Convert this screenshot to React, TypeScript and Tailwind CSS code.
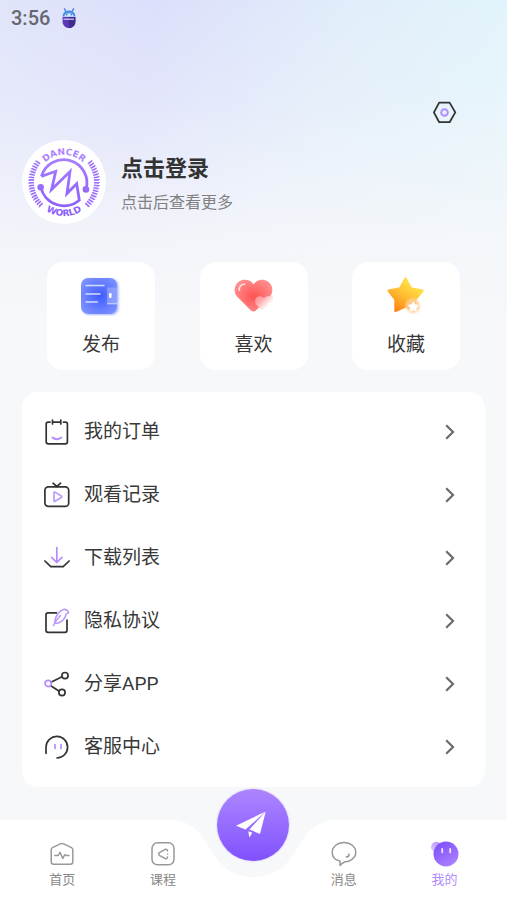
import type { ReactNode } from "react";

const TICKS = Array.from({ length: 18 }, (_, i) => -37 + i * 4.8);

function AvatarLogo() {
  return (
    <svg viewBox="-42 -42 84 84" className="size-full" aria-hidden="true">
      <defs>
        <linearGradient
          id="logo-fill"
          gradientUnits="userSpaceOnUse"
          x1="0"
          y1="-36"
          x2="0"
          y2="36"
        >
          <stop offset="0" stopColor="#b088ff" />
          <stop offset="1" stopColor="#8657fb" />
        </linearGradient>
        <path id="logo-top" d="M-27.2 0A27.2 27.2 0 0 1 27.2 0" />
        <path id="logo-bottom" d="M-34 0A34 34 0 0 0 34 0" />
      </defs>
      <g stroke="url(#logo-fill)" fill="none">
        <path
          d="M-22.6-5.6A23.2 23.2 0 1 1 22 7.4M-22.6-5.6L-8.3-10.7L-12.4 7.4L6-10.4L3 11.6L12.7 1.8L15.3 18.2A23.8 23.8 0 0 1-23.2 5.3"
          strokeWidth="2.8"
        />
        {TICKS.map((deg) => (
          <g key={deg} strokeWidth="1.7">
            <path d="M30 0H35L35 .01" transform={`rotate(${deg})`} />
            <path d="M30 0H35L35 .01" transform={`rotate(${180 - deg})`} />
          </g>
        ))}
      </g>
      <g fill="url(#logo-fill)">
        <circle cx="-23.3" cy="5.2" r="3.3" />
        <circle cx="21.9" cy="7.4" r="3.3" />
        <g
          fontFamily="'DejaVu Sans', sans-serif"
          fontWeight="bold"
          fontSize="9"
          textAnchor="middle"
        >
          <text>
            <textPath href="#logo-top" startOffset="50%">
              DANCER
            </textPath>
          </text>
          <text>
            <textPath href="#logo-bottom" startOffset="50%">
              WORLD
            </textPath>
          </text>
        </g>
      </g>
    </svg>
  );
}

function RobotIcon() {
  return (
    <svg viewBox="0 0 14 20" className="h-5 w-3.5" aria-hidden="true">
      <path d="M2.3.4L4 4M11.7.4L10 4" stroke="#3f7fd6" strokeWidth="1.3" />
      <path d="M.6 8.600C.6 5 3.200 2.600 7 2.600s6.400 2.400 6.400 6z" fill="#4a90e2" />
      <path d="M2.400 8.600c0-2.200 2-3.400 4.600-3.400s4.600 1.200 4.600 3.400z" fill="#d6eafc" />
      <circle cx="4.800" cy="6.800" r=".8" fill="#2f6bc0" />
      <circle cx="9.200" cy="6.800" r=".8" fill="#2f6bc0" />
      <path d="M.6 9h12.800v4.500C13.400 17.500 10.500 20 7 20S.6 17.500.6 13.500z" fill="#5a38b8" />
      <path d="M7 9h6.400v4.500C13.400 17.500 10.500 20 7 20z" fill="#452a8d" />
      <path d="M1.500 11.200h10.500" stroke="#d9d3f3" strokeWidth="1.200" />
    </svg>
  );
}

function SettingsIcon() {
  return (
    <svg viewBox="0 0 24 24" className="size-6" fill="none" aria-hidden="true">
      <path
        d="M6.200 2.600h10.400L22.300 12.400l-5.700 9.800H6.200L.9 12.400z"
        stroke="#333"
        strokeWidth="1.800"
        strokeLinejoin="round"
      />
      <circle cx="11.500" cy="12.500" r="3.300" stroke="#b18fff" strokeWidth="2" />
    </svg>
  );
}

function PublishIcon() {
  return (
    <svg viewBox="1 0 40 40" className="size-10" aria-hidden="true">
      <defs>
        <radialGradient id="publish-fill" cx=".53" cy=".5" r=".68">
          <stop offset="0" stopColor="#3f5cff" />
          <stop offset="1" stopColor="#8598ff" />
        </radialGradient>
        <filter id="publish-glow" x="-20%" y="-20%" width="140%" height="140%">
          <feGaussianBlur stdDeviation="1.100" />
        </filter>
      </defs>
      <rect x="2.500" y="3" width="36" height="36" rx="7" fill="#aab8ff" filter="url(#publish-glow)" />
      <rect x="1" y="2" width="36" height="36" rx="7" fill="url(#publish-fill)" />
      <path d="M6 9.500h18M6 18h14M6 26h11.500" stroke="#d3dbff" strokeWidth="1.400" strokeLinecap="round" />
      <path d="M27 11.500h11v16.500H27z" fill="#a9b7ff" opacity=".55" />
      <path d="M27 27.800h12" stroke="#d3dbff" strokeWidth="1" />
      <rect x="29" y="17" width="2.600" height="5" rx="1" fill="#fff" />
    </svg>
  );
}

function HeartIcon() {
  return (
    <svg viewBox="0 0 40 40" className="size-10" aria-hidden="true">
      <defs>
        <radialGradient id="heart-fill" cx=".5" cy=".52" r=".55">
          <stop offset="0" stopColor="#ff5252" />
          <stop offset="1" stopColor="#ff8d8d" />
        </radialGradient>
        <linearGradient id="heart-small" x1="0" y1="0" x2=".9" y2=".8">
          <stop offset="0" stopColor="#ff9393" />
          <stop offset=".35" stopColor="#ffa9a9" />
          <stop offset=".8" stopColor="#fff" />
        </linearGradient>
      </defs>
      <path
        d="M19.500 8.300C23 3 29.500 2.500 34 5.500C39 9 39.800 16 36 20.500L22 34.500Q19.500 36.700 17 34.500L3 20.500C-.8 16 0 9 5 5.500C9.500 2.500 16 3 19.500 8.300z"
        fill="url(#heart-fill)"
      />
      <path d="M5.300 14.200C5 11 7 8.500 10.800 8" stroke="#ffe0e0" strokeWidth="1.600" strokeLinecap="round" fill="none" />
      <path
        d="M30 22.500C31.500 20 35 19.500 39 20.500V31L30 36L22 28.500C20 25.500 21.500 21 25 20.300C27.300 20 29 21 30 22.500z"
        fill="url(#heart-small)"
      />
    </svg>
  );
}

function StarIcon() {
  return (
    <svg viewBox="0 0 40 40" className="size-10" aria-hidden="true">
      <defs>
        <linearGradient id="star-fill" x1=".75" y1=".2" x2=".25" y2="1">
          <stop offset="0" stopColor="#ffdf45" />
          <stop offset=".45" stopColor="#ffbd33" />
          <stop offset="1" stopColor="#ff8413" />
        </linearGradient>
        <radialGradient id="star-glow">
          <stop offset="0" stopColor="#ffc275" />
          <stop offset=".65" stopColor="#ffd29a" stopOpacity=".8" />
          <stop offset="1" stopColor="#ffe9cf" stopOpacity="0" />
        </radialGradient>
      </defs>
      <path
        d="M19.500 2.500L25 12.500L36.500 14.800L29 23.600L30 34.500L19.500 30.500L9.500 35L9.500 23.600L2.700 14.800L14 12.500z"
        fill="url(#star-fill)"
        stroke="url(#star-fill)"
        strokeWidth="2.400"
        strokeLinejoin="round"
      />
      <circle cx="27" cy="30" r="9" fill="url(#star-glow)" />
      <path
        d="M27.300 25.800l1.600 3 3.500.6-2.500 2.500.5 3.400-3.100-1.500-3.100 1.500.5-3.400-2.500-2.500 3.500-.6z"
        fill="#fff"
        stroke="#fff"
        strokeLinejoin="round"
      />
    </svg>
  );
}

function LineIcon({ children }: { children: ReactNode }) {
  return (
    <svg
      viewBox="0 0 26 26"
      className="size-[26px] shrink-0"
      fill="none"
      stroke="#333"
      strokeWidth="1.700"
      strokeLinecap="round"
      strokeLinejoin="round"
      aria-hidden="true"
    >
      {children}
    </svg>
  );
}

const shortcuts = [
  { label: "发布", icon: <PublishIcon /> },
  { label: "喜欢", icon: <HeartIcon /> },
  { label: "收藏", icon: <StarIcon /> },
];

const menuItems = [
  {
    label: "我的订单",
    icon: (
      <LineIcon>
        <path d="M6 3.200H4.200Q2.200 3.200 2.200 5.200V22.800Q2.200 24.800 4.200 24.800H21.400Q23.400 24.800 23.400 22.800V5.200Q23.400 3.200 21.400 3.200H19.500" />
        <path d="M8.500 1V5M16.800 1V5M8.500 3.200H16.800" />
        <path d="M8.500 18.500Q12.800 22 17.200 18.500" stroke="#b28cff" strokeWidth="2" />
      </LineIcon>
    ),
  },
  {
    label: "观看记录",
    icon: (
      <LineIcon>
        <rect x=".9" y="4.800" width="23.800" height="19.600" rx="3.500" />
        <path d="M9 1.200L12.800 4.500L16.600 1.200" />
        <path d="M10 10.600V18.800Q10 19.700 11 19.300L17.300 15.600Q18.200 14.800 17.300 14L11 10.100Q10 9.700 10 10.600z" stroke="#b99bff" />
      </LineIcon>
    ),
  },
  {
    label: "下载列表",
    icon: (
      <LineIcon>
        <path d="M.9 16L6.800 21.700H19.200L25.100 16" />
        <path d="M12.800 2.500V17M7.600 12.400L12.800 17.500L18 12.400" stroke="#b28cff" />
      </LineIcon>
    ),
  },
  {
    label: "隐私协议",
    icon: (
      <LineIcon>
        <path d="M12.500 4.800H4Q2 4.800 2 6.800V22.300Q2 24.300 4 24.300H21Q23 24.300 23 22.300V12" />
        <path
          d="M9.500 17.500C11 14 13.500 10.500 16.500 7.500M10.500 15.500C10.500 8.500 15.500 2.500 19.500 1.500C21.500 1 24.800 3 24.500 4.500C24.300 5.500 22.500 5 22 6.500C21.500 9.500 18.500 15.200 10.500 15.500"
          stroke="#b99bff"
          strokeWidth="1.600"
        />
      </LineIcon>
    ),
  },
  {
    label: "分享APP",
    icon: (
      <LineIcon>
        <path d="M7 11.200L18 5.800M6.800 14.700L15.200 20.300" />
        <circle cx="21" cy="4.600" r="3.100" />
        <circle cx="18" cy="21.500" r="3.100" />
        <circle cx="4.200" cy="12.500" r="3.100" stroke="#b28cff" />
      </LineIcon>
    ),
  },
  {
    label: "客服中心",
    icon: (
      <LineIcon>
        <path d="M2 19.200V12.700A10.800 10.800 0 1 1 13 24" />
        <path d="M11 10.500V14.500M17 10.500V14.500" stroke="#b28cff" />
      </LineIcon>
    ),
  },
];

function TabIcon({ children }: { children: ReactNode }) {
  return (
    <svg
      viewBox="0 0 28 28"
      className="size-7"
      fill="none"
      stroke="#999"
      strokeWidth="1.500"
      strokeLinecap="round"
      strokeLinejoin="round"
      aria-hidden="true"
    >
      {children}
    </svg>
  );
}

const leftTabs = [
  {
    label: "首页",
    icon: (
      <TabIcon>
        <path d="M12.300 3.900L4.500 7.700Q3.200 8.400 3.200 9.800V21.800Q3.200 24.300 5.700 24.300H22.300Q24.800 24.300 24.800 21.800V9.800Q24.800 8.400 23.500 7.700L15.700 3.900Q14 3.100 12.300 3.900z" />
        <path d="M6.800 15.500H10.300L12 12.300L14.800 18.500L16.800 14.700L18 15.500H21" />
      </TabIcon>
    ),
  },
  {
    label: "课程",
    icon: (
      <TabIcon>
        <rect x="3" y="2.800" width="22" height="22" rx="5.500" />
        <path d="M18.500 11Q18.300 8.800 16.300 9.300L10.800 12.300Q8.500 14 10.800 15.700L16.300 18.700Q18.300 19.200 18.500 17M18.700 14V14.100" />
      </TabIcon>
    ),
  },
];

const rightTabs = [
  {
    label: "消息",
    icon: (
      <TabIcon>
        <path d="M10 21C5 20 2.200 17 2.200 12.600C2.200 6.600 7.500 2.400 14 2.400S25.800 6.600 25.800 12.600C25.800 18.500 19.500 21.500 14.500 22Q11.500 23.500 10 25.500z" />
        <path d="M19 14.500Q18.800 17 16.500 16.800" strokeWidth="1.800" />
      </TabIcon>
    ),
  },
  {
    label: "我的",
    active: true,
    icon: (
      <svg viewBox="0 0 28 28" className="size-7" aria-hidden="true">
        <defs>
          <linearGradient id="mine-fill" x1=".2" y1="0" x2=".8" y2="1">
            <stop offset="0" stopColor="#7d4dfa" />
            <stop offset="1" stopColor="#ae83ff" />
          </linearGradient>
          <linearGradient id="mine-ear" x1="1" y1="0" x2="0" y2="1">
            <stop offset="0" stopColor="#b08cff" />
            <stop offset="1" stopColor="#dccfff" />
          </linearGradient>
        </defs>
        <circle cx="5.300" cy="7" r="5.300" fill="url(#mine-ear)" />
        <circle cx="15" cy="14" r="12.500" fill="url(#mine-fill)" />
        <path d="M11.200 8.800V12.300M19.200 8.800V12.300" stroke="#eee6ff" strokeWidth="1.800" strokeLinecap="round" />
      </svg>
    ),
  },
];

type Tab = { label: string; icon: ReactNode; active?: boolean };

function TabLink({ label, icon, active }: Tab) {
  return (
    <a
      href="#"
      aria-current={active ? "page" : undefined}
      className={
        active
          ? "flex flex-1 flex-col items-center pt-5 text-[13px] leading-5 text-[#b18cff]"
          : "flex flex-1 flex-col items-center pt-5 text-[13px] leading-5 text-[#888]"
      }
    >
      {icon}
      <span className="mt-0.5">{label}</span>
    </a>
  );
}

function TabBar() {
  return (
    <nav className="sticky bottom-0 mt-[33px] h-[81px]">
      <div className="absolute inset-0 flex">
        <div className="flex-1 bg-white" />
        <svg viewBox="0 0 183 81" className="h-[81px] w-[183px]" aria-hidden="true">
          <path
            d="M0 0H8C28 0 38 12 47 27C57 46 71 57 91.500 57S126 46 136 27C145 12 155 0 175 0H183V81H0z"
            fill="#fff"
          />
        </svg>
        <div className="flex-1 bg-white" />
      </div>
      <div className="relative flex h-full items-start px-3">
        {leftTabs.map((tab) => (
          <TabLink key={tab.label} {...tab} />
        ))}
        <div className="flex w-20 pl-[3px]">
          <button
            type="button"
            aria-label="发布"
            className="-mt-[31px] flex size-[72px] items-center justify-center rounded-full bg-linear-to-b from-[#ad85ff] to-[#8150fd] shadow-[0_0_2px_#c9b5ff]"
          >
            <svg viewBox="0 0 36 36" className="size-9" fill="#fff" aria-hidden="true">
              <path d="M30.700 4.500L1 18.700L10.500 22.500z" />
              <path d="M30.700 4.500L25 27L14.500 22.600z" />
              <path d="M13.300 24.200L17.300 25.800L14.300 30.500z" />
            </svg>
          </button>
        </div>
        {rightTabs.map((tab) => (
          <TabLink key={tab.label} {...tab} />
        ))}
      </div>
    </nav>
  );
}

export default function App() {
  return (
    <div className="flex min-h-screen flex-col bg-[#f6f8fa] bg-[linear-gradient(to_bottom,transparent,#f6f7fa40_100px,#f6f7fa90_170px,#f6f7fae0_240px,#f6f8fa_320px),linear-gradient(100deg,#e1e5fa,#dcdffb_24%,#e1edfa_52%,#e2f5fb_80%,#e6f8fb)] font-['Roboto','Noto_Sans_CJK_SC',sans-serif] text-[#383838]">
      <div className="flex h-9 items-center gap-3 px-[11px] text-xl font-medium text-[#66686f]">
        <span>3:56</span>
        <RobotIcon />
      </div>

      <header className="px-[22px] pt-16">
        <div className="flex justify-end pr-7">
          <button type="button" aria-label="设置">
            <SettingsIcon />
          </button>
        </div>
        <a href="#" className="mt-4 flex items-center gap-[15px]">
          <div className="size-[84px] rounded-full bg-white">
            <AvatarLogo />
          </div>
          <div className="pt-2">
            <h1 className="text-[22px] leading-8 font-bold text-[#333]">
              点击登录
            </h1>
            <p className="mt-0.5 text-base leading-8 text-[#808080]">
              点击后查看更多
            </p>
          </div>
        </a>
      </header>

      <div className="mt-[38px] flex justify-between px-[47px]">
        {shortcuts.map(({ label, icon }) => (
          <button
            key={label}
            type="button"
            className="flex size-[108px] flex-col items-center rounded-2xl bg-white pt-3.5 text-[19px] leading-7"
          >
            {icon}
            <span className="mt-[15px]">{label}</span>
          </button>
        ))}
      </div>

      <ul className="mx-[22px] mt-[22px] rounded-2xl bg-white pt-2 pb-[9px]">
        {menuItems.map(({ label, icon }) => (
          <li key={label}>
            <a
              href="#"
              className="flex h-[63px] items-center gap-3.5 pr-[30px] pl-[22px] text-[19px] leading-7"
            >
              {icon}
              <span className="flex-1">{label}</span>
              <svg
                viewBox="0 0 10 16"
                className="h-4 w-2.5"
                fill="none"
                stroke="#6b6b6b"
                strokeWidth="2.200"
                aria-hidden="true"
              >
                <path d="M1.200 1.200L8 8L1.200 14.800" />
              </svg>
            </a>
          </li>
        ))}
      </ul>

      <TabBar />
    </div>
  );
}
